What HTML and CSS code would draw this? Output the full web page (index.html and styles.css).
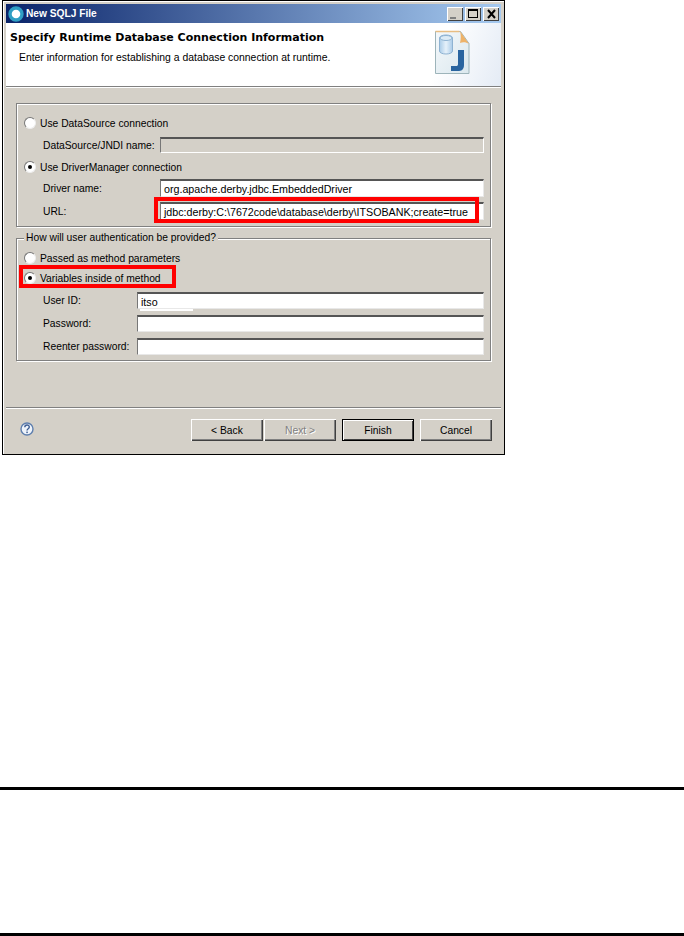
FILE: index.html
```html
<!DOCTYPE html>
<html lang="en">
<head>
    <meta charset="UTF-8">
    <title>New SQLJ File</title>
    <link rel="stylesheet" href="styles.css">
</head>
<body>

<div class="window">
    <div class="titlebar">
        <svg class="app-icon" width="16" height="16" viewBox="0 0 16 16">
            <circle cx="8" cy="8" r="6" fill="#fff" stroke="#2f9fc4" stroke-width="3.4"/>
        </svg>
        <span class="title">New SQLJ File</span>
        <div class="win-buttons">
            <span class="win-btn"><i class="min"></i></span>
            <span class="win-btn"><i class="max"></i></span>
            <span class="win-btn">
                <svg width="11" height="10" viewBox="0 0 11 10"><path d="M2 1l7 8M9 1l-7 8" stroke="#000" stroke-width="2"/></svg>
            </span>
        </div>
    </div>

    <div class="header">
        <div class="header-text">
            <h1>Specify Runtime Database Connection Information</h1>
            <p>Enter information for establishing a database connection at runtime.</p>
        </div>
        <svg class="wizard-icon" width="40" height="48" viewBox="0 0 40 48">
            <defs>
                <linearGradient id="page" x1="0" y1="0" x2="1" y2="1">
                    <stop offset="0" stop-color="#f4f8fb"/>
                    <stop offset="1" stop-color="#dbe8ee"/>
                </linearGradient>
                <linearGradient id="can" x1="0" y1="0" x2="1" y2="0">
                    <stop offset="0" stop-color="#a9cbe8"/>
                    <stop offset="0.5" stop-color="#e6f1fa"/>
                    <stop offset="1" stop-color="#a9cbe8"/>
                </linearGradient>
            </defs>
            <path d="M1.500 1.500h25l8.500 12v30h-33.500z" fill="url(#page)" stroke="#9db4ba"/>
            <path d="M1.500 1.500h24" stroke="#e8bd82" stroke-width="1.500" fill="none"/>
            <path d="M26 1l9 13c-3-2-6-2-9-1 1-4 1-8 0-12z" fill="#eeb268"/>
            <path d="M5.500 8c0-4 13-4 13 0v13c0 4-13 4-13 0z" fill="url(#can)" stroke="#8fb3d2"/>
            <ellipse cx="12" cy="8" rx="6" ry="2.500" fill="#dcebf6" stroke="#8fb3d2"/>
            <path d="M24 20h6v15c0 5-3 6-6 6h-7v-5h5c1.500 0 2-.5 2-2z" fill="#2a65a0"/>
        </svg>
    </div>

    <div class="content">
        <div class="group group-conn">
            <div class="radio-row">
                <span class="radio"></span>
                <label>Use DataSource connection</label>
            </div>
            <div class="field-row row-jndi">
                <label>DataSource/JNDI name:</label>
                <span class="input disabled"></span>
            </div>
            <div class="radio-row row-driver">
                <span class="radio checked"></span>
                <label>Use DriverManager connection</label>
            </div>
            <div class="field-row row-name">
                <label>Driver name:</label>
                <span class="input">org.apache.derby.jdbc.EmbeddedDriver</span>
            </div>
            <div class="field-row row-url">
                <label>URL:</label>
                <span class="input">jdbc:derby:C:\7672code\database\derby\ITSOBANK;create=true</span>
                <span class="mark mark-url"></span>
            </div>
        </div>

        <div class="group group-auth">
            <span class="legend">How will user authentication be provided?</span>
            <div class="radio-row">
                <span class="radio"></span>
                <label>Passed as method parameters</label>
            </div>
            <div class="radio-row row-vars">
                <span class="radio checked"></span>
                <label>Variables inside of method</label>
                <span class="mark mark-vars"></span>
            </div>
            <div class="field-row auth-field row-user">
                <label>User ID:</label>
                <span class="input">itso<b class="patch"></b></span>
            </div>
            <div class="field-row auth-field">
                <label>Password:</label>
                <span class="input"></span>
            </div>
            <div class="field-row auth-field">
                <label>Reenter password:</label>
                <span class="input"></span>
            </div>
        </div>
    </div>

    <div class="footer">
        <svg class="help" width="16" height="16" viewBox="0 0 16 16">
            <circle cx="8" cy="8" r="6" fill="#eef3fa" stroke="#5f7fae" stroke-width="1.400"/>
            <path d="M5.800 6.300c0-3 4.500-3 4.500-.2 0 1.700-2.300 1.700-2.300 3.500" fill="none" stroke="#3f5f94" stroke-width="1.400"/>
            <rect x="7.300" y="10.600" width="1.500" height="1.500" fill="#3f5f94"/>
        </svg>
        <div class="buttons">
            <button class="btn back">&lt; Back</button>
            <button class="btn next" disabled>Next &gt;</button>
            <button class="btn finish">Finish</button>
            <button class="btn cancel">Cancel</button>
        </div>
    </div>
</div>

<hr class="rule rule-top">
<hr class="rule rule-bottom">

</body>
</html>
```

FILE: styles.css
```css
body {
    margin: 0;
    background-color: #fff;
    font-family: "Liberation Sans", Arial, sans-serif;
    font-size: 10.300px;
    color: #000;
    height: 936px;
    overflow: hidden;
}
.window {
    width: 495px;
    height: 447px;
    margin: 0 0 0 2px;
    padding: 3px;
    background-color: #d4d0c8;
    border: 1px solid #000;
    box-shadow: inset 1px 1px 0 #fff;
    display: flex;
    flex-direction: column;
}
.titlebar {
    height: 19px;
    display: flex;
    align-items: center;
    padding: 0 1px 0 1px;
    background: linear-gradient(to right, #0a246a, #a6caf0);
    flex-shrink: 0;
}
.app-icon {
    margin: 0 2px 0 1px;
}
.title {
    color: #fff;
    font-weight: bold;
    font-size: 10.200px;
}
.win-buttons {
    margin-left: auto;
    display: flex;
    gap: 2px;
    margin-right: 1px;
}
.win-btn {
    width: 16px;
    height: 14px;
    background-color: #d4d0c8;
    box-shadow: inset 1px 1px 0 #fff, inset -1px -1px 0 #404040;
    display: flex;
    align-items: center;
    justify-content: center;
}
.win-btn .min {
    width: 6px;
    height: 2px;
    background-color: #808080;
    margin: 8px 5px 0 0;
}
.win-btn .max {
    width: 10px;
    height: 9px;
    box-sizing: border-box;
    border: 1px solid #000;
    border-top-width: 2px;
}
.header {
    height: 63px;
    flex-shrink: 0;
    display: flex;
    justify-content: space-between;
    background: linear-gradient(110deg, #fff 86%, #e4ebf5 100%);
    border-bottom: 1px solid #808080;
    box-shadow: 0 1px 0 #fff;
}
.header h1 {
    margin: 8px 0 0 4px;
    font-family: "DejaVu Sans", sans-serif;
    font-size: 11px;
    font-weight: bold;
}
.header p {
    margin: 8px 0 0 13px;
    font-size: 10.400px;
}
.wizard-icon {
    margin: 7px 27px 0 0;
}
.content {
    flex: 1;
    padding-top: 16px;
}
.group {
    position: relative;
    box-sizing: border-box;
    width: 475px;
    margin-left: 10px;
    border: 1px solid #808080;
    box-shadow: 1px 1px 0 #fff, inset 1px 1px 0 #fff;
}
.group-conn {
    height: 124px;
    padding-top: 12px;
}
.group-auth {
    height: 123px;
    margin-top: 11px;
    padding-top: 12px;
}
.legend {
    position: absolute;
    top: -7px;
    left: 7px;
    padding: 0 2px;
    background-color: #d4d0c8;
}
.radio-row {
    position: relative;
    display: flex;
    align-items: center;
    height: 14px;
    padding-left: 7px;
}
.radio {
    box-sizing: border-box;
    width: 12px;
    height: 12px;
    margin-right: 4px;
    border-radius: 50%;
    background-color: #fff;
    border: 1px solid #777;
    border-right-color: #eee;
    border-bottom-color: #eee;
    display: flex;
    align-items: center;
    justify-content: center;
}
.radio.checked::after {
    content: "";
    width: 4px;
    height: 4px;
    border-radius: 50%;
    background-color: #000;
}
.field-row {
    position: relative;
    display: flex;
    align-items: center;
    height: 18px;
    padding-left: 26px;
}
.field-row label {
    width: 117px;
    flex-shrink: 0;
    white-space: nowrap;
}
.input {
    position: relative;
    box-sizing: border-box;
    width: 324px;
    height: 18px;
    padding: 2px 0 0 3px;
    font-size: 10.700px;
    background-color: #fff;
    border-top: 2px solid #555;
    border-left: 1px solid #777;
    border-right: 1px solid #e8e8e8;
    border-bottom: 1px solid #e8e8e8;
    white-space: nowrap;
}
.input.disabled {
    height: 16px;
    background-color: #d4d0c8;
    border-right-color: #fff;
    border-bottom: 1px solid #fff;
}
.row-jndi {
    height: 16px;
    margin-top: 7px;
}
.row-driver {
    margin-top: 7px;
}
.row-name {
    margin-top: 5px;
}
.row-url {
    margin-top: 5px;
}
.row-url label {
    padding-top: 1px;
}
.auth-field {
    height: 17px;
}
.auth-field label {
    width: 94px;
    margin-top: -1px;
}
.auth-field .input {
    width: 347px;
    height: 17px;
}
.group-auth .row-vars {
    margin-top: 6px;
}
.row-user {
    margin-top: 7px;
}
.auth-field + .auth-field {
    margin-top: 6px;
}
.patch {
    position: absolute;
    bottom: -3px;
    left: 2px;
    width: 53px;
    height: 2px;
    background-color: #fff;
}
.mark {
    position: absolute;
    box-sizing: border-box;
    border: 4px solid #f00;
}
.mark-url {
    left: 137px;
    top: -5px;
    width: 325px;
    height: 26px;
}
.mark-vars {
    left: 2px;
    top: -6px;
    width: 157px;
    height: 23px;
}
.footer {
    height: 43px;
    flex-shrink: 0;
    display: flex;
    align-items: flex-start;
    justify-content: space-between;
    border-top: 1px solid #808080;
    box-shadow: inset 0 1px 0 #fff;
}
.help {
    margin: 13px 0 0 13px;
}
.buttons {
    display: flex;
    gap: 6px;
    margin: 11px 9px 0 0;
}
.btn {
    box-sizing: border-box;
    width: 72px;
    height: 22px;
    padding: 0;
    background-color: #d4d0c8;
    border: none;
    box-shadow: inset 1px 1px 0 #fff, inset -1px -1px 0 #404040, inset -2px -2px 0 #808080;
    font-family: "Liberation Sans", Arial, sans-serif;
    font-size: 10.300px;
    color: #000;
}
.btn.back {
    margin-right: -5px;
}
.btn.next {
    color: #808080;
    text-shadow: 1px 1px 0 #fff;
}
.btn.finish {
    outline: 1px solid #000;
    outline-offset: -1px;
    box-shadow: inset 2px 2px 0 #fff, inset -2px -2px 0 #404040;
}
.rule {
    margin: 0;
    border: none;
    height: 3px;
    background-color: #000;
}
.rule-top {
    margin-top: 332px;
}
.rule-bottom {
    margin-top: 143px;
}
```
